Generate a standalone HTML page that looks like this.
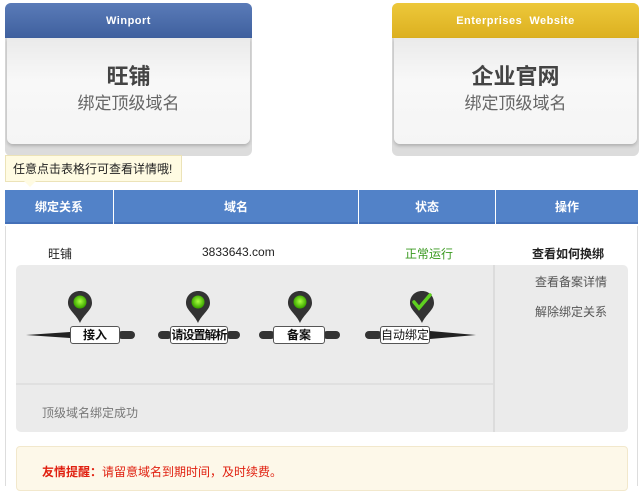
<!DOCTYPE html>
<html><head><meta charset="utf-8"><style>
*{margin:0;padding:0;box-sizing:border-box}
body{width:640px;height:486px;overflow:hidden;background:#fff;position:relative;font-family:"Liberation Sans","Noto Sans CJK SC",sans-serif;font-size:12px;color:#333}
.a{position:absolute}
.card{position:absolute;top:3px;width:247px;height:153px;border-radius:6px;background:#dcdcdc;overflow:hidden}
.card .hd{height:35px;color:#fff;font-weight:bold;font-size:11px;text-align:center;line-height:36px;letter-spacing:.5px}
.card .bd{position:absolute;left:2px;right:2px;top:35px;height:106px;background:linear-gradient(#eaeaea,#f8f8f8 40%,#f5f5f5);border-radius:0 0 6px 6px;box-shadow:0 2px 3px rgba(0,0,0,.2);text-align:center}
.t1{font-size:22px;font-weight:bold;color:#444;margin-top:26px;line-height:26px}
.t2{font-size:17px;color:#666;line-height:22px;margin-top:3px}
.th{position:absolute;top:190px;height:34px;background:#5282c8;color:#fff;font-weight:bold;text-align:center;line-height:34px;border-bottom:2px solid #4470b8}
.lbl{position:absolute;top:326px;height:18px;background:#fff;border:1px solid #555;border-radius:3px;font-weight:bold;font-size:12px;text-align:center;line-height:16px;color:#111}
.stub{position:absolute;top:331px;height:8px;background:#333;border-radius:4px}
</style></head><body>
<div class="card" style="left:5px"><div class="hd" style="background:linear-gradient(#5a7bb8,#3f609e)">Winport</div><div class="bd"><div class="t1">旺铺</div><div class="t2">绑定顶级域名</div></div></div>
<div class="card" style="left:392px"><div class="hd" style="background:linear-gradient(#edc83a,#dcb020)">Enterprises&nbsp; Website</div><div class="bd"><div class="t1">企业官网</div><div class="t2">绑定顶级域名</div></div></div>

<div class="a" style="left:5px;top:155px;width:177px;height:27px;background:#fffbe2;border:1px solid #ece3b8;font-size:12px;line-height:26px;padding-left:7px;color:#222">任意点击表格行可查看详情哦!</div>
<div class="a" style="left:24px;top:181px;width:0;height:0;border-left:6px solid transparent;border-right:6px solid transparent;border-top:6px solid #fffbe2"></div>

<div class="th" style="left:5px;width:108px">绑定关系</div>
<div class="th" style="left:114px;width:244px">域名</div>
<div class="th" style="left:359px;width:136px">状态</div>
<div class="th" style="left:496px;width:142px">操作</div>
<div class="a" style="left:5px;top:226px;width:1px;height:260px;background:#ddd"></div>
<div class="a" style="left:637px;top:226px;width:1px;height:260px;background:#ddd"></div>

<div class="a" style="left:48px;top:245px;font-size:12px;color:#222">旺铺</div>
<div class="a" style="left:202px;top:245px;font-size:12px;color:#222">3833643.com</div>
<div class="a" style="left:405px;top:245px;font-size:12px;color:#3a9a20">正常运行</div>
<div class="a" style="left:532px;top:245px;font-size:12px;font-weight:bold;color:#222">查看如何换绑</div>

<div class="a" style="left:16px;top:265px;width:612px;height:167px;background:#ebebeb;border-radius:5px"></div>
<div class="a" style="left:493px;top:265px;width:2px;height:167px;background:#dcdcdc"></div>
<div class="a" style="left:16px;top:383px;width:477px;height:2px;background:#e0e0e0"></div>
<div class="a" style="left:535px;top:273px;color:#555">查看备案详情</div>
<div class="a" style="left:535px;top:303px;color:#555">解除绑定关系</div>
<div class="a" style="left:42px;top:404px;color:#777">顶级域名绑定成功</div>

<svg class="a" style="left:0;top:0" width="640" height="486">
<defs><radialGradient id="g" cx="50%" cy="45%" r="50%"><stop offset="0" stop-color="#aaff40"/><stop offset="1" stop-color="#3ea800"/></radialGradient></defs>
<polygon points="26,335 70,332 70,338" fill="#222"/>
<polygon points="430,331 476,335 430,339" fill="#222"/>
<g fill="#333">
<path transform="translate(68,291)" d="M12 0C5 0 0 5 0 12C0 19 8 23 12 32C16 23 24 19 24 12C24 5 19 0 12 0Z"/>
<path transform="translate(186,291)" d="M12 0C5 0 0 5 0 12C0 19 8 23 12 32C16 23 24 19 24 12C24 5 19 0 12 0Z"/>
<path transform="translate(288,291)" d="M12 0C5 0 0 5 0 12C0 19 8 23 12 32C16 23 24 19 24 12C24 5 19 0 12 0Z"/>
<path transform="translate(410,291)" d="M12 0C5 0 0 5 0 12C0 19 8 23 12 32C16 23 24 19 24 12C24 5 19 0 12 0Z"/>
</g>
<circle cx="80" cy="302" r="6.5" fill="url(#g)"/>
<circle cx="198" cy="302" r="6.5" fill="url(#g)"/>
<circle cx="300" cy="302" r="6.5" fill="url(#g)"/>
<path d="M414 302l5 6l11-13" stroke="#5fd020" stroke-width="3.5" fill="none" stroke-linecap="round"/>
</svg>
<div class="stub" style="left:118px;width:17px"></div>
<div class="stub" style="left:158px;width:14px"></div>
<div class="stub" style="left:226px;width:14px"></div>
<div class="stub" style="left:259px;width:16px"></div>
<div class="stub" style="left:323px;width:17px"></div>
<div class="stub" style="left:365px;width:17px"></div>
<div class="lbl" style="left:70px;width:50px">接入</div>
<div class="lbl" style="left:170px;width:58px;letter-spacing:-1px">请设置解析</div>
<div class="lbl" style="left:273px;width:52px">备案</div>
<div class="lbl" style="left:380px;width:50px;font-weight:normal">自动绑定</div>

<div class="a" style="left:16px;top:446px;width:612px;height:45px;background:#fdf8e9;border:1px solid #f2e8cc;border-radius:4px"></div>
<div class="a" style="left:42px;top:463px;color:#e02010"><b>友情提醒：</b>请留意域名到期时间，及时续费。</div>
</body></html>
